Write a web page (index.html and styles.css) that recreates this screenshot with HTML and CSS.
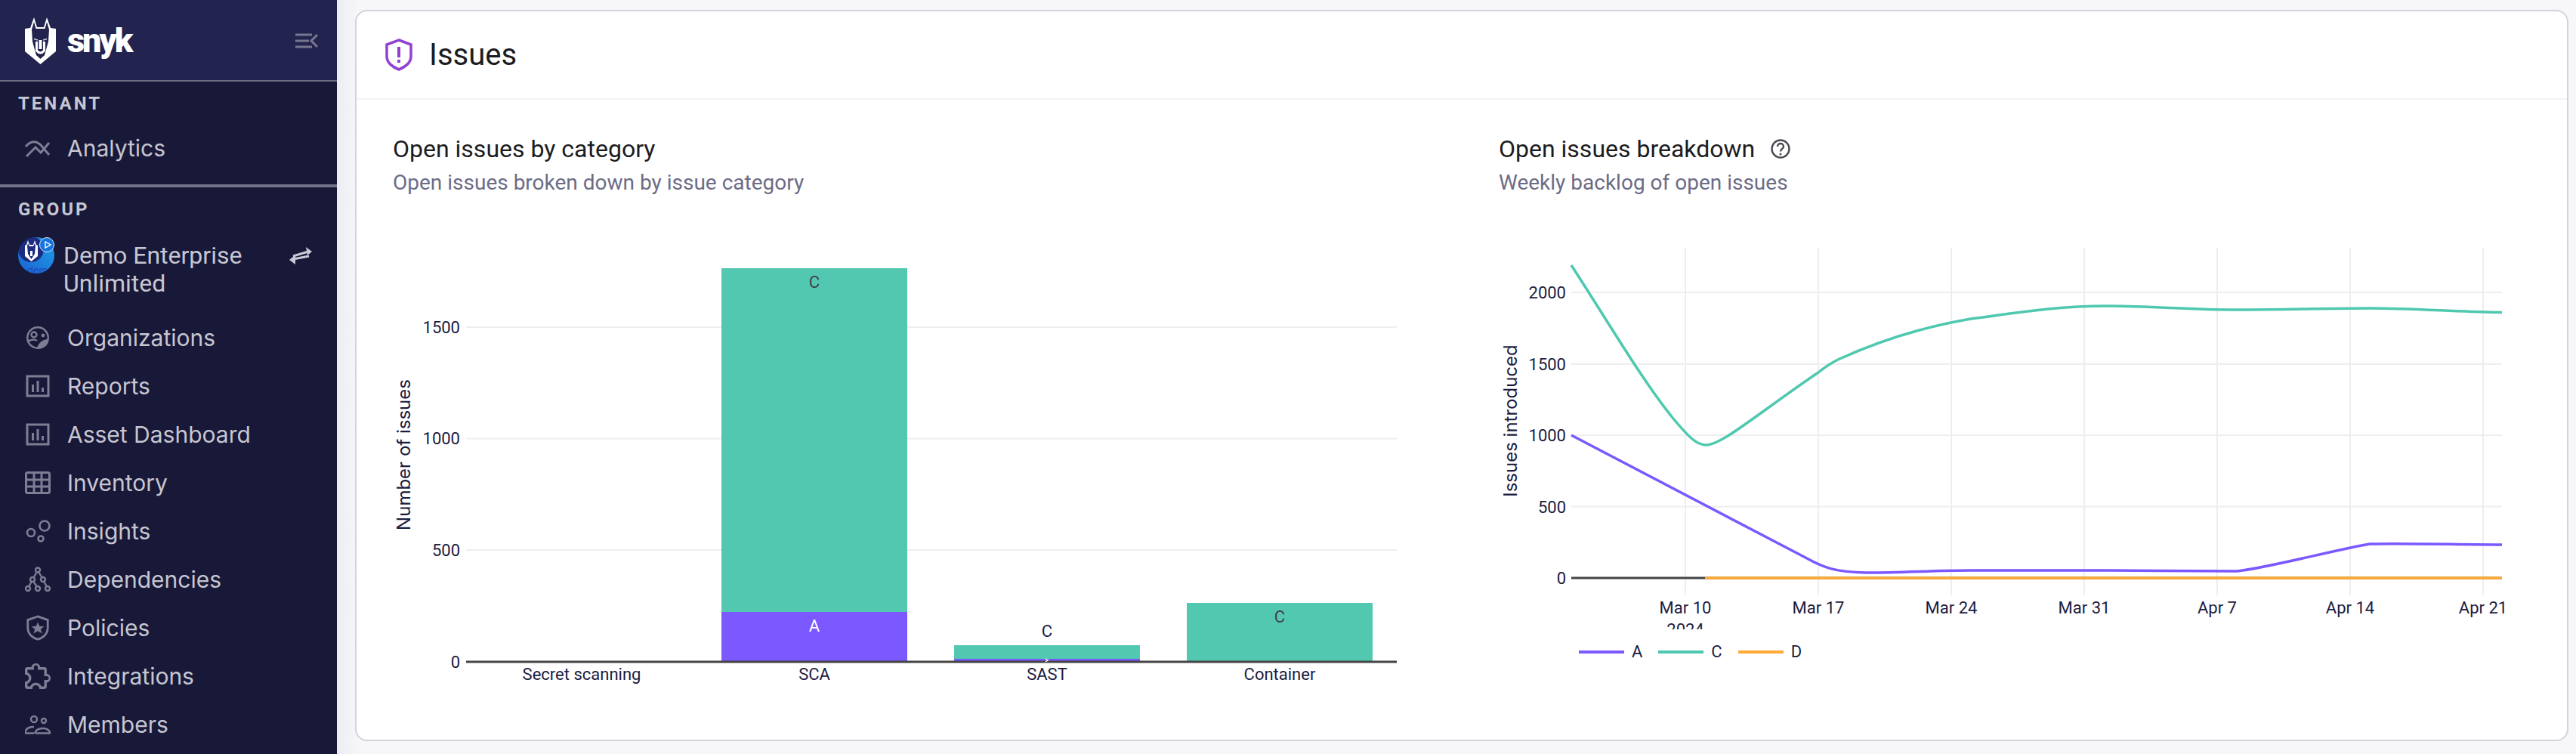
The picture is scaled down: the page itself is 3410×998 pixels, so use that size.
FILE: index.html
```html
<!DOCTYPE html>
<html lang="en">
<head>
    <meta charset="UTF-8">
    <title>Issues - Snyk</title>
    <link rel="stylesheet" href="styles.css">
</head>
<body>
<div class="app">
    <aside class="sidebar">
        <div class="brand">
            <svg class="brand-dog" viewBox="0 0 41 62">
                <path fill="#fff" d="M0 15 7 14 12 0 16 13H25L29 0 34 14 41 15V45L20.5 62 0 45Z"/>
                <path fill="#232350" d="M9 16 12 6 14.5 15H26.5L29 6 32 16 31 32 26 50 20.5 55 15 50 10 32Z"/>
                <path fill="none" stroke="#fff" stroke-width="3" d="M15.5 32V44Q20.5 50 25.5 44V32"/>
                <path fill="#fff" d="M18.5 30H22.5V42H18.5Z"/>
                <path fill="none" stroke="#cfcfe0" stroke-width="1.4" d="M12 28.5 17 30M29 28.5 24 30"/>
            </svg>
            <span class="brand-name">snyk</span>
            <svg class="brand-toggle" viewBox="0 0 30 20">
                <path fill="none" stroke="#77778f" stroke-width="3" d="M0 2H22M0 10H18M0 18H22M29 2 21 10 29 18"/>
            </svg>
        </div>

        <section class="side-section side-section-tenant">
            <div class="side-label">TENANT</div>
            <a class="nav-item">
                <svg class="nav-icon" viewBox="0 0 34 24"><path fill="none" stroke="#7d7d94" stroke-width="3" d="M1 10C8 2 15 2 21 8L32 21M2 23 14 11 21 18 32 5"/></svg>
                <span>Analytics</span>
            </a>
        </section>

        <section class="side-section">
            <div class="side-label">GROUP</div>
            <div class="org-row">
                <svg class="org-avatar" viewBox="0 0 48 48">
                    <defs>
                        <clipPath id="avatar-clip"><circle cx="24" cy="24" r="24"/></clipPath>
                        <linearGradient id="avatar-bg" x1="1" y1="0" x2="0" y2="1">
                            <stop offset="0" stop-color="#1fa0e8"/>
                            <stop offset="1" stop-color="#1a62d0"/>
                        </linearGradient>
                    </defs>
                    <g clip-path="url(#avatar-clip)">
                        <rect width="48" height="48" fill="url(#avatar-bg)"/>
                        <circle cx="17" cy="16" r="17" fill="#1d2b80"/>
                        <path fill="#fff" d="M9 11 11 10 13 4 15 10H20L22 4 24 10 26 11V25L17.500 32 9 25Z"/>
                        <path fill="#1d2b80" d="M12 12 13 8 15 12H20L22 8 23 12 22 22 17.500 29 13 22Z"/>
                        <path fill="#fff" d="M16 18H19V25H16Z"/>
                        <text class="org-avatar-text" x="12" y="49">demo</text>
                    </g>
                    <circle cx="38" cy="10" r="9.500" fill="#1574e0" stroke="#dbe8ff" stroke-width="1"/>
                    <path fill="none" stroke="#fff" stroke-width="1.400" d="M36 6V14L43 10Z"/>
                </svg>
                <div class="org-name">Demo Enterprise Unlimited</div>
                <svg class="org-switch" viewBox="0 0 30 24">
                    <path fill="none" stroke="#c9c9d6" stroke-width="3" d="M5 12 25 6M26 12 5 16"/>
                    <path fill="#c9c9d6" d="M22 0 30 6 24 11ZM8 10 0 17 8 23Z"/>
                </svg>
            </div>
            <nav class="nav-list">
                <a class="nav-item">
                    <svg class="nav-icon" viewBox="0 0 34 30">
                        <circle cx="17" cy="15" r="15" fill="#7d7d94"/>
                        <circle cx="17" cy="15" r="12.500" fill="#181838"/>
                        <path fill="#7d7d94" d="M31 17C27 17 22 18 18 24 17 26 16 28 16 30 25 30 32 24 31 17Z"/>
                        <circle cx="12" cy="11" r="3.500" fill="none" stroke="#7d7d94" stroke-width="2.400"/>
                        <circle cx="24" cy="12" r="2.400" fill="#7d7d94"/>
                        <path fill="none" stroke="#7d7d94" stroke-width="2.400" d="M4 20C8 17 14 17 16 19"/>
                    </svg>
                    <span>Organizations</span>
                </a>
                <a class="nav-item">
                    <svg class="nav-icon" viewBox="0 0 34 30">
                        <path fill="none" stroke="#7d7d94" stroke-width="3" d="M3 2H31V28H3Z"/>
                        <path fill="#7d7d94" d="M9 13H12V23H9ZM15.500 8H18.500V23H15.500ZM22 17H25V23H22Z"/>
                    </svg>
                    <span>Reports</span>
                </a>
                <a class="nav-item">
                    <svg class="nav-icon" viewBox="0 0 34 30">
                        <path fill="none" stroke="#7d7d94" stroke-width="3" d="M3 2H31V28H3Z"/>
                        <path fill="#7d7d94" d="M9 13H12V23H9ZM15.500 8H18.500V23H15.500ZM22 17H25V23H22Z"/>
                    </svg>
                    <span>Asset Dashboard</span>
                </a>
                <a class="nav-item">
                    <svg class="nav-icon" viewBox="0 0 34 30">
                        <rect x="1.500" y="1.500" width="31" height="27" rx="2" fill="none" stroke="#7d7d94" stroke-width="3"/>
                        <path fill="none" stroke="#7d7d94" stroke-width="3" d="M12 2V28M22 2V28M2 11H32M2 20H32"/>
                    </svg>
                    <span>Inventory</span>
                </a>
                <a class="nav-item">
                    <svg class="nav-icon" viewBox="0 0 34 30">
                        <g fill="none" stroke="#7d7d94" stroke-width="2.600">
                            <ellipse cx="26" cy="8" rx="6.500" ry="6.500"/>
                            <circle cx="8" cy="17" r="5"/>
                            <circle cx="21" cy="25" r="3.500"/>
                        </g>
                    </svg>
                    <span>Insights</span>
                </a>
                <a class="nav-item">
                    <svg class="nav-icon" viewBox="0 0 34 34">
                        <g fill="none" stroke="#7d7d94" stroke-width="2.400">
                            <circle cx="17" cy="4.500" r="3"/>
                            <circle cx="10" cy="17" r="3"/>
                            <circle cx="24" cy="17" r="3"/>
                            <circle cx="4" cy="29" r="3"/>
                            <circle cx="17" cy="29" r="3"/>
                            <circle cx="30" cy="29" r="3"/>
                            <path d="M15.500 7.500 11.500 14.500M18.500 7.500 22.500 14.500M8.500 20 5.500 26M11.500 20 15.500 26M25.500 20 28.500 26"/>
                        </g>
                    </svg>
                    <span>Dependencies</span>
                </a>
                <a class="nav-item">
                    <svg class="nav-icon" viewBox="0 0 34 36">
                        <path fill="none" stroke="#7d7d94" stroke-width="3" d="M17 2 31 7V18C31 26 25 32 17 34 9 32 3 26 3 18V7Z"/>
                        <path fill="#7d7d94" d="M17 10 19.500 16H26L21 20 23 26 17 22.500 11 26 13 20 8 16H14.500Z"/>
                    </svg>
                    <span>Policies</span>
                </a>
                <a class="nav-item">
                    <svg class="nav-icon" viewBox="2 2 20 20">
                        <path fill="#7d7d94" d="M22,13.5C22,15.26 20.7,16.72 19,16.96V20A2,2 0 0,1 17,22H13.2V21.7A2.7,2.7 0 0,0 10.5,19C9,19 7.8,20.21 7.8,21.7V22H4A2,2 0 0,1 2,20V16.2H2.3C3.79,16.2 5,15 5,13.5C5,12 3.79,10.8 2.3,10.8H2V7A2,2 0 0,1 4,5H7.04C7.28,3.3 8.74,2 10.5,2C12.26,2 13.72,3.3 13.96,5H17A2,2 0 0,1 19,7V10.04C20.7,10.28 22,11.74 22,13.5M17,15H19A1.5,1.5 0 0,0 20.5,13.5A1.5,1.5 0 0,0 19,12H17V7H12V5A1.5,1.5 0 0,0 10.5,3.5A1.5,1.5 0 0,0 9,5V7H4V9.12C5.76,9.8 7,11.5 7,13.5C7,15.5 5.75,17.2 4,17.88V20H6.12C6.8,18.25 8.5,17 10.5,17C12.5,17 14.2,18.25 14.88,20H17V15Z"/>
                    </svg>
                    <span>Integrations</span>
                </a>
                <a class="nav-item">
                    <svg class="nav-icon" viewBox="0 0 34 26">
                        <g fill="none" stroke="#7d7d94" stroke-width="2.400">
                            <circle cx="12" cy="6" r="4"/>
                            <circle cx="25" cy="8" r="3"/>
                            <path d="M0 25V24C1 18 6 16 12 16M33.500 25C33 20 28 18 24 18 18 18 14 20 13 25"/>
                            <path d="M0 24.500H12M14 24.500H34"/>
                        </g>
                    </svg>
                    <span>Members</span>
                </a>
            </nav>
        </section>
    </aside>

    <main class="main">
        <div class="card">
            <header class="card-head">
                <svg class="card-icon" viewBox="0 0 36 43">
                    <path fill="none" stroke="#9141d2" stroke-width="3.500" d="M18 2 34 8V24C34 32 26 38 18 41 10 38 2 32 2 24V8Z"/>
                    <path fill="#9141d2" d="M16 11H20V25H16ZM16 28H20V32H16Z"/>
                </svg>
                <h1 class="card-title">Issues</h1>
            </header>
            <div class="card-body">
                <section class="panel panel-left">
                    <h2 class="panel-title">Open issues by category</h2>
                    <p class="panel-sub">Open issues broken down by issue category</p>
                    <svg class="chart chart-bars" width="1380" height="622" viewBox="500 298 1380 622">
                        <g class="grid">
                            <path d="M617 433H1849M617 580.500H1849M617 728H1849"/>
                        </g>
                        <rect class="fill-c" x="955" y="355" width="246" height="455"/>
                        <rect class="fill-a" x="955" y="810" width="246" height="66"/>
                        <rect class="fill-c" x="1263" y="854" width="246" height="18"/>
                        <rect class="fill-a" x="1263" y="872" width="246" height="4"/>
                        <rect class="fill-c" x="1571" y="798" width="246" height="78"/>
                        <path class="axis" d="M617 876H1849"/>
                        <path fill="none" stroke="#fff" stroke-width="1.500" d="M1384 872 1387 874 1384 876"/>
                        <g class="tick tick-y">
                            <text x="609" y="441">1500</text>
                            <text x="609" y="588">1000</text>
                            <text x="609" y="736">500</text>
                            <text x="609" y="884">0</text>
                        </g>
                        <g class="tick tick-x">
                            <text x="770" y="900">Secret scanning</text>
                            <text x="1078" y="900">SCA</text>
                            <text x="1386" y="900">SAST</text>
                            <text x="1694" y="900">Container</text>
                        </g>
                        <g class="tick tick-x">
                            <text class="tick-dim" x="1078" y="381">C</text>
                            <text class="tick-light" x="1078" y="836">A</text>
                            <text x="1386" y="843">C</text>
                            <text class="tick-dim" x="1694" y="824">C</text>
                        </g>
                        <text class="axis-title" transform="translate(543 602) rotate(-90)">Number of issues</text>
                    </svg>
                </section>

                <section class="panel panel-right">
                    <h2 class="panel-title">Open issues breakdown
                        <svg class="help-icon" viewBox="0 0 26 26">
                            <circle cx="13" cy="13" r="11.500" fill="none" stroke="#4b4b55" stroke-width="2.400"/>
                            <path fill="none" stroke="#4b4b55" stroke-width="2.400" d="M9 10C9 7 11 6 13 6 15 6 17 7.500 17 10 17 13 13 13 13 16.500"/>
                            <circle cx="13" cy="20" r="1.500" fill="#4b4b55"/>
                        </svg>
                    </h2>
                    <p class="panel-sub">Weekly backlog of open issues</p>
                    <svg class="chart chart-lines" width="1370" height="535" viewBox="1975 298 1370 535">
                        <g class="grid">
                            <path d="M2231 328V788M2407 328V788M2583 328V788M2759 328V788M2935 328V788M3111 328V788M3287 328V788"/>
                            <path d="M2080 387H3312M2080 482H3312M2080 576H3312M2080 670.500H3312"/>
                        </g>
                        <path class="axis" d="M2080 765H3312"/>
                        <path class="line line-c" d="M2080 351C2130 428 2175 505 2215 554 2235 578 2246 589 2258 589 2280 589 2330 545 2407 493 2418 484 2425 480 2433 476 2490 450 2550 432 2609 422 2670 414 2725 405 2785 405 2845 405 2900 410 2961 410 3020 410 3080 408 3137 408 3195 408 3255 413 3312 413.500"/>
                        <path class="line line-a" d="M2080 576 2390 738C2415 752 2430 757 2470 758 2520 758 2560 755 2609 755 2670 755 2725 755 2785 755 2845 755 2900 756 2961 756 3000 752 3090 728 3137 720 3195 719 3255 721 3312 721"/>
                        <path class="line line-d" d="M2257 765H3312"/>
                        <g class="tick tick-y">
                            <text x="2073" y="395">2000</text>
                            <text x="2073" y="490">1500</text>
                            <text x="2073" y="584">1000</text>
                            <text x="2073" y="679">500</text>
                            <text x="2073" y="773">0</text>
                        </g>
                        <g class="tick tick-x">
                            <text x="2231" y="812">Mar 10</text>
                            <text x="2407" y="812">Mar 17</text>
                            <text x="2583" y="812">Mar 24</text>
                            <text x="2759" y="812">Mar 31</text>
                            <text x="2935" y="812">Apr 7</text>
                            <text x="3111" y="812">Apr 14</text>
                            <text x="3287" y="812">Apr 21</text>
                            <text x="2231" y="841">2024</text>
                        </g>
                        <text class="axis-title" transform="translate(2008 557) rotate(-90)">Issues introduced</text>
                    </svg>
                    <ul class="legend">
                        <li class="legend-item"><i class="legend-key key-a"></i>A</li>
                        <li class="legend-item"><i class="legend-key key-c"></i>C</li>
                        <li class="legend-item"><i class="legend-key key-d"></i>D</li>
                    </ul>
                </section>
            </div>
        </div>
    </main>
</div>
</body>
</html>
```

FILE: styles.css
```css
*{
    margin: 0;
    padding: 0;
    box-sizing: border-box;
}
html,body{
    width: 100%;
    height: 100%;
    overflow: hidden;
}
body{
    font-family: Roboto, "Liberation Sans", sans-serif;
    color: #1c1c21;
    background: #f7f7fa;
}
.app{
    display: flex;
    height: 998px;
}

/* sidebar */
.sidebar{
    flex: 0 0 446px;
    background: #181838;
    color: #c6c6d2;
    font-family: Inter, Roboto, sans-serif;
    overflow: hidden;
}
.brand{
    display: flex;
    align-items: center;
    height: 108px;
    padding: 0 25px 4px 33px;
    background: #232350;
    border-bottom: 2px solid #6d6d84;
}
.brand-dog{
    width: 41px;
    height: 62px;
    margin-top: 6px;
}
.brand-name{
    margin-top: 4px;
    margin-left: 15px;
    font-family: Roboto, sans-serif;
    font-size: 45px;
    font-weight: 900;
    letter-spacing: -3px;
    line-height: 1;
    color: #fff;
}
.brand-toggle{
    width: 30px;
    height: 20px;
    margin-top: 6px;
    margin-left: auto;
}
.side-section{
    padding-top: 14px;
}
.side-section-tenant{
    height: 140px;
    border-bottom: 4px solid #73738a;
}
.side-label{
    height: 30px;
    padding-left: 24px;
    font-family: Roboto, sans-serif;
    font-size: 24px;
    font-weight: 700;
    letter-spacing: 3px;
    line-height: 30px;
}
.side-section-tenant .nav-item{
    margin-top: 12px;
}
.nav-item{
    display: flex;
    align-items: center;
    gap: 22px;
    height: 64px;
    padding-left: 33px;
    font-size: 30px;
}
.nav-icon{
    flex: 0 0 34px;
    width: 34px;
    height: 34px;
}
.org-row{
    display: flex;
    align-items: flex-start;
    height: 101px;
    margin-top: 22px;
    padding: 0 33px 0 24px;
}
.org-avatar{
    flex: 0 0 48px;
    width: 48px;
    height: 48px;
}
.org-avatar-text{
    font-size: 13px;
    fill: #1b45b8;
}
.org-name{
    width: 270px;
    margin-left: 12px;
    font-family: Roboto, sans-serif;
    font-size: 32px;
    line-height: 37px;
    margin-top: 6px;
}
.org-switch{
    width: 30px;
    height: 24px;
    margin-top: 13px;
    margin-left: auto;
}

/* main */
.main{
    flex: 1;
    min-width: 0;
    padding: 13px 10px 17px 24px;
    background: linear-gradient(90deg, #ecedf3, #f7f7fa 30px);
}
.card{
    height: 100%;
    background: #fff;
    border: 2px solid #d3d3d9;
    border-radius: 16px;
    overflow: hidden;
}
.card-head{
    display: flex;
    align-items: center;
    height: 117px;
    padding-left: 38px;
    border-bottom: 2px solid #f2f2f5;
}
.card-icon{
    width: 36px;
    height: 43px;
}
.card-title{
    margin-left: 22px;
    font-size: 40px;
    font-weight: 400;
}
.card-body{
    display: flex;
}
.panel-left{
    flex: 0 0 1512px;
    padding: 46px 0 0 48px;
}
.panel-right{
    flex: 1;
    min-width: 0;
    padding-top: 46px;
}
.panel-title{
    display: flex;
    align-items: center;
    gap: 21px;
    height: 38px;
    font-size: 32px;
    font-weight: 400;
    line-height: 38px;
}
.panel-sub{
    height: 38px;
    margin-top: 7px;
    font-size: 28px;
    line-height: 38px;
    color: #6c6c86;
}
.help-icon{
    width: 26px;
    height: 26px;
}

/* charts */
.chart{
    display: block;
    margin-top: 37px;
}
.chart-bars{
    margin-left: -20px;
}
.chart-lines{
    margin-left: -9px;
}
.grid path{
    fill: none;
    stroke: #eeeef0;
    stroke-width: 2;
}
.axis{
    fill: none;
    stroke: #444;
    stroke-width: 3;
}
.fill-a{
    fill: #7b59ff;
}
.fill-c{
    fill: #53c8b1;
}
.tick text{
    font-family: Roboto, sans-serif;
    font-size: 22px;
    fill: #1c1c3f;
}
.tick-y text{
    text-anchor: end;
}
.tick-x text{
    text-anchor: middle;
}
.tick .tick-light{
    fill: #fff;
}
.tick .tick-dim{
    fill: #404048;
}
.axis-title{
    font-family: Inter, sans-serif;
    font-size: 24px;
    fill: #1c1c3f;
    text-anchor: middle;
}
.line{
    fill: none;
    stroke-width: 3.500;
}
.line-a{
    stroke: #7b59ff;
}
.line-c{
    stroke: #4fc8b0;
}
.line-d{
    stroke: #ffaa33;
}
.legend{
    display: flex;
    gap: 21px;
    margin: 15px 0 0 106px;
    list-style: none;
    font-size: 22px;
    color: #1c1c3f;
    line-height: 30px;
}
.legend-item{
    display: flex;
    align-items: center;
    gap: 10px;
}
.legend-key{
    width: 60px;
    height: 4px;
}
.key-a{
    background: #7b59ff;
}
.key-c{
    background: #4fc8b0;
}
.key-d{
    background: #ffaa33;
}
```
